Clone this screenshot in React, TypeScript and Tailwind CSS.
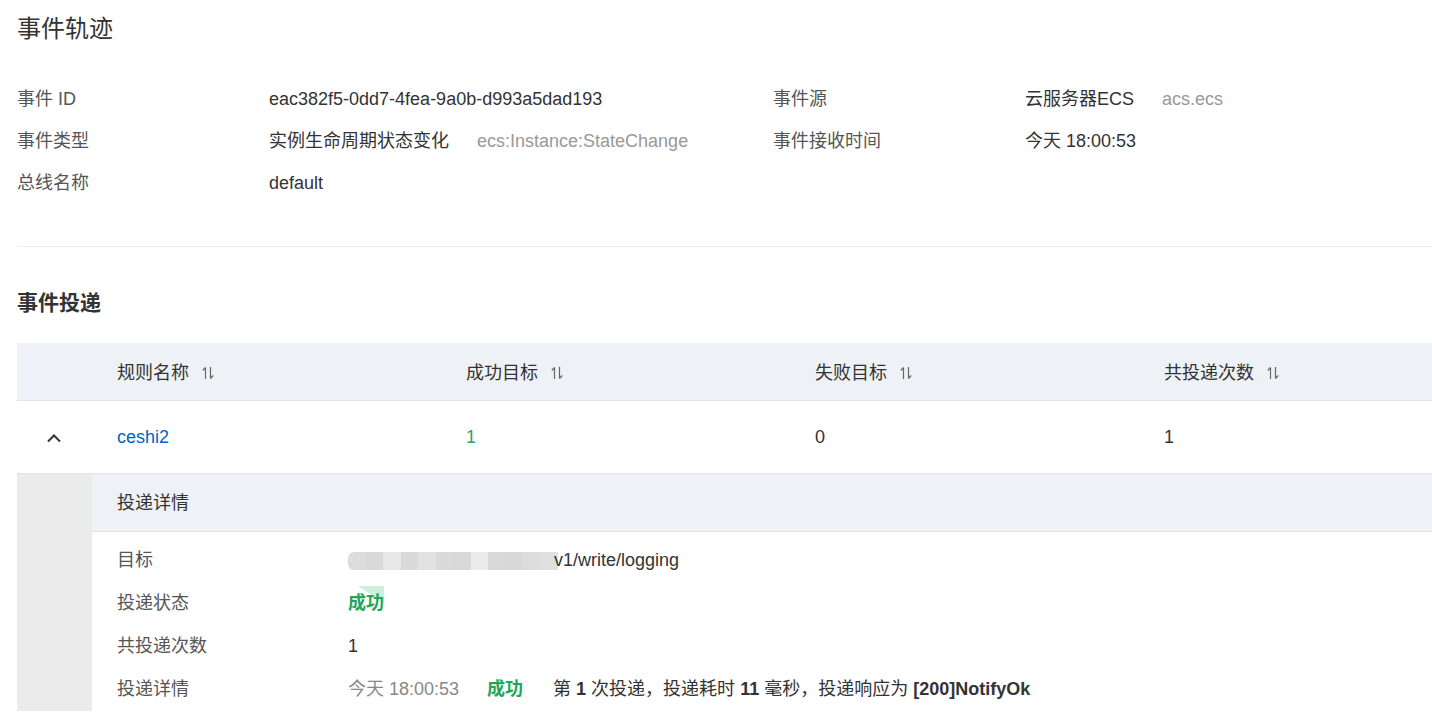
import React from 'react';

const font = { fontFamily: '"Liberation Sans", "Noto Sans CJK SC", sans-serif' };

type InfoItem = { label: string; value: string; extra?: string };

const leftInfo: InfoItem[] = [
  { label: '事件 ID', value: 'eac382f5-0dd7-4fea-9a0b-d993a5dad193' },
  { label: '事件类型', value: '实例生命周期状态变化', extra: 'ecs:Instance:StateChange' },
  { label: '总线名称', value: 'default' },
];

const rightInfo: InfoItem[] = [
  { label: '事件源', value: '云服务器ECS', extra: 'acs.ecs' },
  { label: '事件接收时间', value: '今天 18:00:53' },
];

const columns = ['规则名称', '成功目标', '失败目标', '共投递次数'];

// pixelated mask over the target endpoint host
const maskShades = [
  '#dcdcdc', '#d9d9d9', '#e8e8e8', '#dadada', '#e2e2e2', '#dadada',
  '#d9d9d9', '#ebebeb', '#d9d9d9', '#d8d8d8', '#dcdcdc', '#e0e0e0',
];

function SortIcon() {
  return (
    <svg width="14" height="16" viewBox="0 0 14 16" className="ml-[12px] text-[#666]" fill="none">
      <path d="M4.5 2.5V14M4.5 2.5L1.8 5.5" stroke="currentColor" strokeWidth="1.2" />
      <path d="M9.5 2V13.5M9.5 13.5L12.2 10.5" stroke="currentColor" strokeWidth="1.2" />
    </svg>
  );
}

function ChevronUp() {
  return (
    <svg width="16" height="10" viewBox="0 0 16 10" fill="none">
      <path d="M2 8.5L8 2.5L14 8.5" stroke="#333" strokeWidth="2" />
    </svg>
  );
}

function InfoRow({ item }: { item: InfoItem }) {
  return (
    <div className="flex h-[42px] items-center">
      <div className="w-[252px] shrink-0 text-[#555]">{item.label}</div>
      <div className="flex items-center text-[#333]">
        <span>{item.value}</span>
        {item.extra && <span className="ml-[28px] text-[#999]">{item.extra}</span>}
      </div>
    </div>
  );
}

function DetailRow({ label, children }: { label: string; children: React.ReactNode }) {
  return (
    <div className="flex h-[43px] items-center">
      <div className="w-[231px] shrink-0 text-[#555]">{label}</div>
      <div className="flex items-center text-[#333]">{children}</div>
    </div>
  );
}

export default function App() {
  return (
    <div className="min-h-screen overflow-hidden bg-white pl-[17px] text-[18px] text-[#333]" style={font}>
      {/* Event trace */}
      <h1 className="flex h-[58px] items-center text-[24px] font-normal text-[#333]">事件轨迹</h1>

      <div className="mt-[20px] flex">
        <div className="w-[756px] shrink-0">
          {leftInfo.map((item) => (
            <InfoRow key={item.label} item={item} />
          ))}
        </div>
        <div className="flex-1">
          {rightInfo.map((item) => (
            <InfoRow key={item.label} item={item} />
          ))}
        </div>
      </div>

      <div className="mt-[42px] h-px bg-[#ececec]" />

      {/* Event delivery */}
      <h2 className="mt-[35px] flex h-[42px] items-center text-[21px] font-bold text-[#333]">事件投递</h2>

      <div className="mt-[19px] overflow-hidden">
        <div className="w-[1471px]">
          {/* header */}
          <div className="flex h-[58px] items-center border-b border-[#e3e3e3] bg-[#eef1f6] pt-[3px]">
            <div className="w-[75px] shrink-0" />
            {columns.map((col) => (
              <div key={col} className="flex w-[349px] shrink-0 items-center pl-[25px] text-[#333]">
                {col}
                <SortIcon />
              </div>
            ))}
          </div>

          {/* data row */}
          <div className="flex h-[73px] items-center border-b border-[#e3e3e3] pt-[1px]">
            <div className="flex w-[75px] shrink-0 items-center justify-center pr-[2px]">
              <ChevronUp />
            </div>
            <div className="w-[349px] shrink-0 pl-[25px] text-[#0064c8]">ceshi2</div>
            <div className="w-[349px] shrink-0 pl-[25px] text-[#2ea36a]">1</div>
            <div className="w-[349px] shrink-0 pl-[25px]">0</div>
            <div className="w-[349px] shrink-0 pl-[25px]">1</div>
          </div>

          {/* expanded detail */}
          <div className="flex">
            <div className="w-[75px] shrink-0 bg-[#ebebeb]" />
            <div className="flex-1">
              <div className="flex h-[58px] items-center border-b border-[#e3e3e3] bg-[#eef1f6] pl-[25px] pt-[2px]">
                投递详情
              </div>
              <div className="pl-[25px] pt-[7px]">
                <DetailRow label="目标">
                  <span className="flex h-[18px] overflow-hidden rounded-l-[6px]">
                    {maskShades.map((c, i) => (
                      <span key={i} className="h-full w-[17.5px]" style={{ backgroundColor: c }} />
                    ))}
                  </span>
                  <span className="-ml-[4px]">v1/write/logging</span>
                </DetailRow>
                <DetailRow label="投递状态">
                  <span className="relative font-bold text-[#23a55a]">
                    <svg width="26" height="17" viewBox="0 0 26 17" className="absolute -top-[4px] left-[10px]">
                      <path d="M0 0H26V17Z" fill="#cfeedd" />
                    </svg>
                    <span className="relative">成功</span>
                  </span>
                </DetailRow>
                <DetailRow label="共投递次数">1</DetailRow>
                <DetailRow label="投递详情">
                  <span className="text-[#888]">今天 18:00:53</span>
                  <span className="ml-[28px] font-bold text-[#23a55a]">成功</span>
                  <span className="ml-[30px]">
                    第 <b>1</b> 次投递，投递耗时 <b>11</b> 毫秒，投递响应为 <b>[200]NotifyOk</b>
                  </span>
                </DetailRow>
              </div>
            </div>
          </div>
        </div>
      </div>
    </div>
  );
}
